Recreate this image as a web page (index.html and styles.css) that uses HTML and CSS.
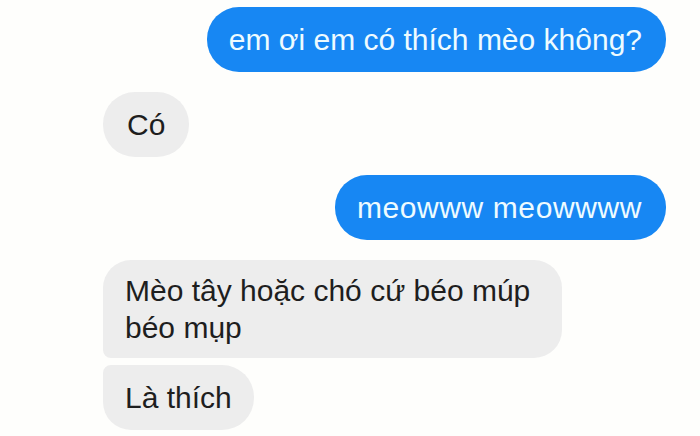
FILE: index.html
```html
<!DOCTYPE html>
<html lang="vi">
<head>
<meta charset="utf-8">
<link rel="stylesheet" href="styles.css">
</head>
<body>
<div class="chat">
  <div class="msg out first">em ơi em có thích mèo không?</div>
  <div class="msg in single">Có</div>
  <div class="msg out second">meowww meowwww</div>
  <div class="msg in top two-line">Mèo tây hoặc chó cứ béo múp<br>béo mụp</div>
  <div class="msg in bottom">Là thích</div>
</div>
</body>
</html>
```
FILE: styles.css
```css
html, body {
  margin: 0;
  padding: 0;
  background: #fefefc;
}
body {
  width: 700px;
  height: 436px;
  overflow: hidden;
  font-family: "Liberation Sans", Arial, sans-serif;
}
.chat {
  display: flex;
  flex-direction: column;
  padding: 7px 34px 0 103px;
}
.msg {
  box-sizing: border-box;
  font-size: 30px;
  line-height: 37px;
  padding: 14px 22px;
  border-radius: 32px;
}
.out {
  align-self: flex-end;
  background: #1787f3;
  color: #eefbff;
}
.in {
  align-self: flex-start;
  background: #ededed;
  color: #1e1e1e;
}
.first {
  margin-bottom: 20px;
  padding: 14px 24px 14px 22px;
}
.single { margin-bottom: 18px; padding: 14px 24px; }
.second {
  margin-bottom: 20px;
  padding: 14px 24px 14px 22px;
  letter-spacing: 0.6px;
}
.two-line {
  padding: 12px 32px 12px 22px;
  border-radius: 28px 28px 28px 8px;
  margin-bottom: 7px;
}
.bottom {
  border-radius: 8px 32px 32px 28px;
}
```
